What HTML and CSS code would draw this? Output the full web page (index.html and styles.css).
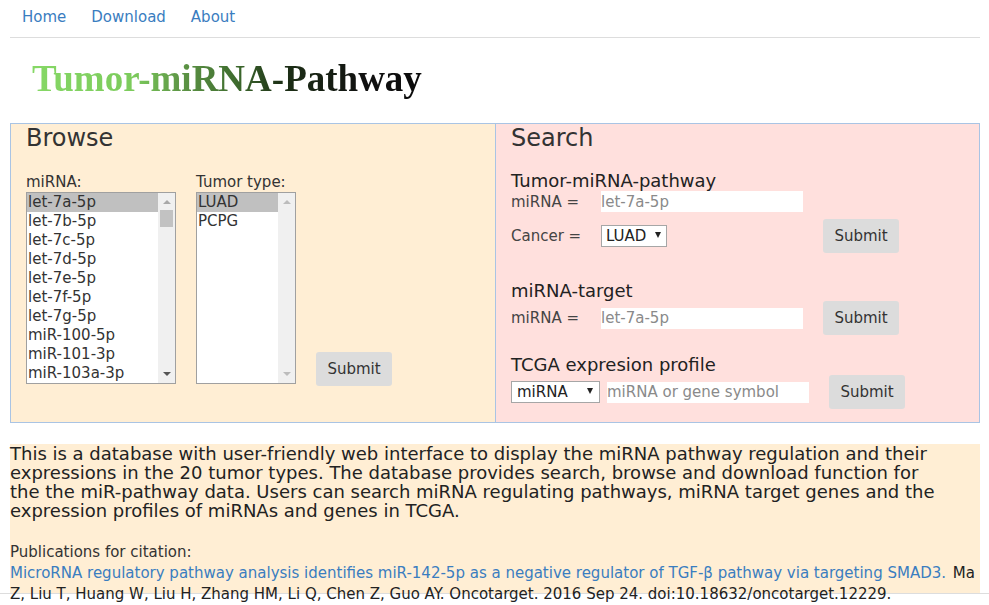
FILE: index.html
```html
<!DOCTYPE html>
<html lang="en">
<head>
<meta charset="utf-8">
<title>Tumor-miRNA-Pathway</title>
<link rel="stylesheet" href="styles.css">
</head>
<body>
<nav class="nav">
  <a href="#">Home</a>
  <a href="#">Download</a>
  <a href="#">About</a>
</nav>
<div class="rule"></div>
<h1 class="title">Tumor-miRNA-Pathway</h1>

<div class="panels">
  <section class="panel browse">
    <h2 class="panel-title">Browse</h2>
    <div class="browse-row">
      <div class="field">
        <div class="label">miRNA:</div>
        <div class="listbox mirna-list">
          <ul class="items">
            <li class="sel">let-7a-5p</li>
            <li>let-7b-5p</li>
            <li>let-7c-5p</li>
            <li>let-7d-5p</li>
            <li>let-7e-5p</li>
            <li>let-7f-5p</li>
            <li>let-7g-5p</li>
            <li>miR-100-5p</li>
            <li>miR-101-3p</li>
            <li>miR-103a-3p</li>
          </ul>
          <div class="sbar">
            <span class="arr up dark-up"></span>
            <span class="thumb"></span>
            <span class="arr down dark"></span>
          </div>
        </div>
      </div>
      <div class="field">
        <div class="label">Tumor type:</div>
        <div class="listbox tumor-list">
          <ul class="items">
            <li class="sel">LUAD</li>
            <li>PCPG</li>
          </ul>
          <div class="sbar">
            <span class="arr up"></span>
            <span class="arr down"></span>
          </div>
        </div>
      </div>
      <button class="btn browse-btn">Submit</button>
    </div>
  </section>

  <section class="panel search">
    <h2 class="panel-title">Search</h2>
    <div class="sub s1">
      <h3 class="sub-title">Tumor-miRNA-pathway</h3>
      <div class="row r-input">
        <span class="rlabel">miRNA =</span>
        <input class="txt" type="text" placeholder="let-7a-5p">
      </div>
      <div class="row r-select">
        <span class="rlabel">Cancer =</span>
        <div class="sel-box cancer"><span>LUAD</span><i class="tri"></i></div>
        <button class="btn">Submit</button>
      </div>
    </div>
    <div class="sub s2">
      <h3 class="sub-title">miRNA-target</h3>
      <div class="row r-btn">
        <span class="rlabel">miRNA =</span>
        <input class="txt" type="text" placeholder="let-7a-5p">
        <button class="btn">Submit</button>
      </div>
    </div>
    <div class="sub s3">
      <h3 class="sub-title">TCGA expresion profile</h3>
      <div class="row r-btn">
        <div class="sel-box kind"><span>miRNA</span><i class="tri"></i></div>
        <input class="txt gene" type="text" placeholder="miRNA or gene symbol">
        <button class="btn">Submit</button>
      </div>
    </div>
  </section>
</div>

<div class="desc">
  <p class="intro">This is a database with user-friendly web interface to display the miRNA pathway regulation and their<br>expressions in the 20 tumor types. The database provides search, browse and download function for<br>the the miR-pathway data. Users can search miRNA regulating pathways, miRNA target genes and the<br>expression profiles of miRNAs and genes in TCGA.</p>
  <p class="cite-head">Publications for citation:</p>
  <p class="cite"><a href="#">MicroRNA regulatory pathway analysis identifies miR-142-5p as a negative regulator of TGF-β pathway via targeting SMAD3.</a> Ma<br>Z, Liu T, Huang W, Liu H, Zhang HM, Li Q, Chen Z, Guo AY. Oncotarget. 2016 Sep 24. doi:10.18632/oncotarget.12229.</p>
</div>
<div class="foot"></div>
</body>
</html>
```

FILE: styles.css
```css
* { box-sizing: border-box; }

body {
  margin: 0;
  font-family: "DejaVu Sans", Verdana, sans-serif;
  font-size: 15px;
  color: #333;
  background: #fff;
}

a { color: #3a7dc0; text-decoration: none; }

.nav {
  display: flex;
  gap: 25px;
  padding: 7px 0 0 22px;
  height: 37px;
  line-height: 20px;
  font-size: 15px;
}

.rule {
  margin: 0 9px 0 10px;
  border-top: 1px solid #ddd;
}

.title {
  margin: 21px 0 0 32px;
  font-family: "Liberation Serif", "Times New Roman", serif;
  font-weight: bold;
  font-size: 37px;
  line-height: 40px;
  height: 40px;
  display: inline-block;
  background: linear-gradient(to right, #86d866 0%, #7ccb5c 26%, #5e9646 38%, #3f6d2f 52%, #1d3016 64%, #111 85%, #0a0a0a 100%);
  -webkit-background-clip: text;
  background-clip: text;
  color: transparent;
}

.panels {
  display: grid;
  grid-template-columns: 485px 485px;
  margin: 24px 9px 0 10px;
  height: 300px;
}

.panel {
  border: 1px solid #a9c4e4;
  padding: 0 15px;
}

.browse { background: #ffeed4; border-right: none; }
.search { background: #ffe0dd; }

.panel-title {
  margin: 0;
  font-weight: normal;
  font-size: 24px;
  line-height: 28px;
  color: #333;
}

.browse-row {
  display: flex;
  align-items: flex-end;
  gap: 20px;
  margin-top: 21px;
}

.label {
  line-height: 18px;
  margin-bottom: 1px;
}

.listbox {
  display: flex;
  height: 192px;
  border: 1px solid #a0a0a0;
  background: #fff;
}

.mirna-list { width: 150px; }
.tumor-list { width: 100px; }

.items {
  list-style: none;
  margin: 0;
  padding: 0;
  flex: 1;
}

.items li {
  line-height: 19px;
  height: 19px;
  padding-left: 1px;
  white-space: nowrap;
}

.items li.sel { background: #c0c0c0; }

.sbar {
  width: 17px;
  background: #f0f0f0;
  position: relative;
}

.arr {
  position: absolute;
  left: 5px;
  width: 0;
  height: 0;
  border-left: 4px solid transparent;
  border-right: 4px solid transparent;
}

.arr.up { top: 7px; border-bottom: 4px solid #bcbcbc; }
.arr.dark-up { border-bottom-color: #a8a8a8; }
.arr.down { bottom: 7px; border-top: 4px solid #bcbcbc; }
.arr.dark { border-top-color: #555; }

.thumb {
  position: absolute;
  left: 2px;
  top: 17px;
  width: 13px;
  height: 17px;
  background: #c2c2c2;
}

.btn {
  font-family: "DejaVu Sans", Verdana, sans-serif;
  font-size: 15px;
  color: #333;
  background: #dcdcdc;
  border: none;
  border-radius: 3px;
  width: 76px;
  height: 34px;
  padding: 0;
}

.browse-btn { margin-bottom: -2px; }

.sub { margin: 0; }
.s1 { margin-top: 18px; }
.s2 { margin-top: 27px; }
.s3 { margin-top: 19px; }

.sub-title {
  margin: 0;
  font-weight: normal;
  font-size: 18px;
  line-height: 21px;
  color: #222;
}

.row {
  display: flex;
  align-items: center;
}

.r-input { height: 21px; }
.r-select { height: 34px; margin-top: 7px; }
.r-btn { height: 34px; }

.rlabel {
  width: 90px;
  color: #444;
}

.txt {
  width: 202px;
  height: 21px;
  border: none;
  padding: 0;
  margin: 0;
  font-family: "DejaVu Sans", Verdana, sans-serif;
  font-size: 15px;
  color: #333;
  background: #fff;
  outline: none;
}

.txt::placeholder { color: #8a8a8a; }

.sel-box {
  display: flex;
  align-items: center;
  justify-content: space-between;
  height: 22px;
  border: 1px solid #a6a6a6;
  background: #fff;
  color: #222;
}

.sel-box .tri {
  width: 0;
  height: 0;
  border-left: 3px solid transparent;
  border-right: 3px solid transparent;
  border-top: 6px solid #222;
  margin-bottom: 3px;
}

.cancer { width: 66px; padding: 0 5px 0 4px; margin-right: 156px; }
.kind { width: 89px; padding: 0 6px 0 5px; margin-right: 7px; }

.s2 .txt { margin-right: 20px; }
.gene { margin-right: 20px; }

.desc {
  margin: 21px 9px 0 10px;
  height: 149px;
  background: #ffeed4;
}

.desc p { margin: 0; }

.intro {
  font-size: 18px;
  line-height: 19px;
  white-space: nowrap;
  color: #222;
}

.cite-head {
  margin-top: 22px !important;
  line-height: 21px;
}

.cite {
  line-height: 21px;
  white-space: nowrap;
  color: #222;
}

.cite a { margin-right: 2px; }

.foot {
  border-top: 1px solid #ddd;
  height: 20px;
}
```
